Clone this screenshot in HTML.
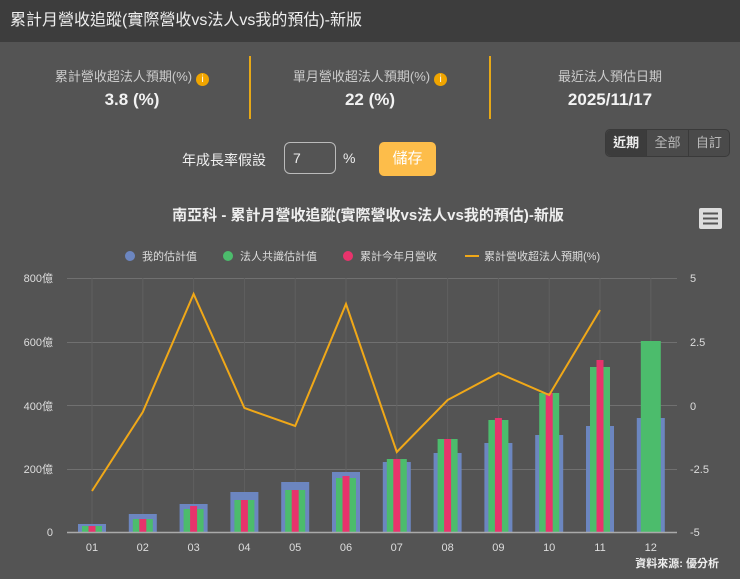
<!DOCTYPE html>
<html><head><meta charset="utf-8"><style>
body{margin:0;width:740px;height:579px;background:#545454;font-family:"Liberation Sans","Noto Sans CJK TC",sans-serif;color:#ddd;overflow:hidden;position:relative}
.hdr{height:42px;background:#3d3d3d;color:#eee;font-size:16px;line-height:42px;padding-left:10px}
.abs{position:absolute}
.lab{font-size:13px;color:#ccc;text-align:center;width:240px}
.val{font-size:17px;font-weight:bold;color:#f2f2f2;text-align:center;width:240px}
.vl{position:absolute;width:2px;background:#e6a817;top:56px;height:63px}
.i{display:inline-block;width:13px;height:13px;border-radius:50%;background:#f0a500;color:#fff;font-size:10px;line-height:13px;text-align:center;vertical-align:-1px;margin-left:4px}
</style></head><body>
<div class="hdr">累計月營收追蹤(實際營收vs法人vs我的預估)-新版</div>
<div class="abs lab" style="left:12px;top:66px">累計營收超法人預期(%)<span class="i">i</span></div>
<div class="abs val" style="left:12px;top:90px">3.8 (%)</div>
<div class="vl" style="left:249px"></div>
<div class="abs lab" style="left:250px;top:66px">單月營收超法人預期(%)<span class="i">i</span></div>
<div class="abs val" style="left:250px;top:90px">22 (%)</div>
<div class="vl" style="left:489px"></div>
<div class="abs lab" style="left:490px;top:66px">最近法人預估日期</div>
<div class="abs val" style="left:490px;top:90px">2025/11/17</div>
<div class="abs" style="left:605px;top:129px;width:123px;height:26px;border-radius:5px;background:#4a4a4a;border:1px solid #3a3a3a;display:flex;font-size:13px;color:#bbb;line-height:26px">
<div style="width:41px;text-align:center;background:#3c3c3c;color:#eee;font-weight:bold;border-radius:5px 0 0 5px">近期</div>
<div style="width:41px;text-align:center;border-left:1px solid #3a3a3a">全部</div>
<div style="width:41px;text-align:center;border-left:1px solid #3a3a3a">自訂</div></div>
<div class="abs" style="left:182px;top:150px;font-size:14px;color:#eee">年成長率假設</div>
<div class="abs" style="left:284px;top:142px;width:52px;height:32px;border:1px solid #bbb;border-radius:6px;box-sizing:border-box;font-size:14px;color:#eee;line-height:30px;padding-left:8px">7</div>
<div class="abs" style="left:343px;top:150px;font-size:14px;color:#eee">%</div>
<div class="abs" style="left:379px;top:142px;width:57px;height:34px;border-radius:5px;background:#fdbd4a;color:#fff;font-size:15px;line-height:34px;text-align:center">儲存</div>
<svg class="abs" style="left:0;top:0" width="740" height="579" font-family="Liberation Sans,Noto Sans CJK TC,sans-serif">
<text x="368" y="220" text-anchor="middle" fill="#eee" font-size="15" font-weight="bold">南亞科 - 累計月營收追蹤(實際營收vs法人vs我的預估)-新版</text>
<rect x="699" y="208" width="23" height="21" rx="2" fill="#ddd"/>
<g stroke="#555" stroke-width="2"><line x1="703" y1="213.5" x2="718" y2="213.5"/><line x1="703" y1="218.5" x2="718" y2="218.5"/><line x1="703" y1="223.5" x2="718" y2="223.5"/></g>
<g font-size="11" fill="#ddd">
<circle cx="130" cy="256" r="5" fill="#6c86c0"/><text x="142" y="260">我的估計值</text>
<circle cx="228" cy="256" r="5" fill="#4cbc6c"/><text x="240" y="260">法人共識估計值</text>
<circle cx="348" cy="256" r="5" fill="#e8336c"/><text x="360" y="260">累計今年月營收</text>
<line x1="465" y1="256" x2="479" y2="256" stroke="#f0a818" stroke-width="2"/><text x="484" y="260">累計營收超法人預期(%)</text>
</g>
<g stroke="#707070" stroke-width="1">
<line x1="67" y1="278.5" x2="677" y2="278.5"/><line x1="67" y1="342.5" x2="677" y2="342.5"/><line x1="67" y1="405.5" x2="677" y2="405.5"/><line x1="67" y1="469.5" x2="677" y2="469.5"/>
</g>
<g stroke="#606060" stroke-width="1">
<line x1="92" y1="278" x2="92" y2="532"/><line x1="142.8" y1="278" x2="142.8" y2="532"/><line x1="193.6" y1="278" x2="193.6" y2="532"/><line x1="244.4" y1="278" x2="244.4" y2="532"/><line x1="295.2" y1="278" x2="295.2" y2="532"/><line x1="346" y1="278" x2="346" y2="532"/><line x1="396.8" y1="278" x2="396.8" y2="532"/><line x1="447.6" y1="278" x2="447.6" y2="532"/><line x1="498.4" y1="278" x2="498.4" y2="532"/><line x1="549.2" y1="278" x2="549.2" y2="532"/><line x1="600" y1="278" x2="600" y2="532"/><line x1="650.8" y1="278" x2="650.8" y2="532"/>
</g>
<g fill="#6c86c0">
<rect x="78" y="524" width="28" height="8"/><rect x="128.8" y="514" width="28" height="18"/><rect x="179.6" y="504" width="28" height="28"/><rect x="230.4" y="492" width="28" height="40"/><rect x="281.2" y="482" width="28" height="50"/><rect x="332" y="472" width="28" height="60"/><rect x="382.8" y="462" width="28" height="70"/><rect x="433.6" y="453" width="28" height="79"/><rect x="484.4" y="443" width="28" height="89"/><rect x="535.2" y="435" width="28" height="97"/><rect x="586" y="426" width="28" height="106"/><rect x="636.8" y="418" width="28" height="114"/>
</g>
<g fill="#4cbc6c">
<rect x="82" y="526" width="20" height="6"/><rect x="132.8" y="519" width="20" height="13"/><rect x="183.6" y="509" width="20" height="23"/><rect x="234.4" y="500" width="20" height="32"/><rect x="285.2" y="490" width="20" height="42"/><rect x="336" y="478" width="20" height="54"/><rect x="386.8" y="459" width="20" height="73"/><rect x="437.6" y="439" width="20" height="93"/><rect x="488.4" y="420" width="20" height="112"/><rect x="539.2" y="393" width="20" height="139"/><rect x="590" y="367" width="20" height="165"/><rect x="640.8" y="341" width="20" height="191"/>
</g>
<g fill="#e8336c">
<rect x="88.5" y="526" width="7" height="6"/><rect x="139.3" y="519" width="7" height="13"/><rect x="190.1" y="506" width="7" height="26"/><rect x="240.9" y="500" width="7" height="32"/><rect x="291.7" y="490" width="7" height="42"/><rect x="342.5" y="476" width="7" height="56"/><rect x="393.3" y="459" width="7" height="73"/><rect x="444.1" y="439" width="7" height="93"/><rect x="494.9" y="418" width="7" height="114"/><rect x="545.7" y="393" width="7" height="139"/><rect x="596.5" y="360" width="7" height="172"/>
</g>
<line x1="67" y1="532.5" x2="677" y2="532.5" stroke="#aaa" stroke-width="1.5"/>
<polyline fill="none" stroke="#f0a818" stroke-width="2" points="92,491 142.8,412 193.6,294 244.4,408 295.2,426 346,304 396.8,452 447.6,400 498.4,373 549.2,395 600,310"/>
<g font-size="11" fill="#ddd" text-anchor="end">
<text x="53" y="282">800億</text><text x="53" y="346">600億</text><text x="53" y="410">400億</text><text x="53" y="473">200億</text><text x="53" y="536">0</text>
</g>
<g font-size="11" fill="#ddd">
<text x="690" y="282">5</text><text x="690" y="346">2.5</text><text x="690" y="410">0</text><text x="690" y="473">-2.5</text><text x="690" y="536">-5</text>
</g>
<g font-size="11" fill="#ddd" text-anchor="middle">
<text x="92" y="551">01</text><text x="142.8" y="551">02</text><text x="193.6" y="551">03</text><text x="244.4" y="551">04</text><text x="295.2" y="551">05</text><text x="346" y="551">06</text><text x="396.8" y="551">07</text><text x="447.6" y="551">08</text><text x="498.4" y="551">09</text><text x="549.2" y="551">10</text><text x="600" y="551">11</text><text x="650.8" y="551">12</text>
</g>
<text x="719" y="567" text-anchor="end" font-size="11" font-weight="bold" fill="#eee">資料來源: 優分析</text>
</svg>
</body></html>
